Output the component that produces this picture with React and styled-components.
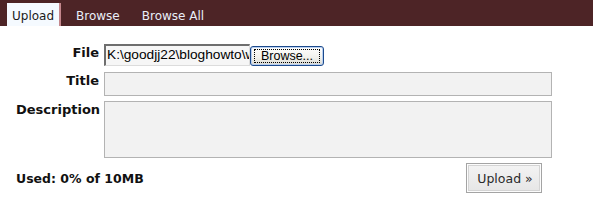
import React from "react";
import styled, { createGlobalStyle } from "styled-components";

const Global = createGlobalStyle`
  html, body { margin: 0; padding: 0; background: #ffffff; }
  body { font-family: "DejaVu Sans", Verdana, sans-serif; }
`;

const Page = styled.div`
  width: 593px;
  height: 214px;
  background: #fff;
`;

const TabBar = styled.div`
  display: flex;
  align-items: flex-end;
  gap: 10px;
  height: 26px;
  padding-left: 7px;
  background: #4d2426;
`;

const Tab = styled.div`
  height: 23px;
  box-sizing: border-box;
  padding: 4px 5px 0 5px;
  font-size: 12px;
  line-height: 18px;
  color: ${(p) => (p.$active ? "#1b1b1b" : "#e9eef8")};
  background: ${(p) => (p.$active ? "#f5faff" : "transparent")};
  border-right: 2px solid ${(p) => (p.$active ? "#c4878c" : "transparent")};
`;

const Form = styled.div`
  display: grid;
  grid-template-columns: 83px 448px;
  column-gap: 5px;
  row-gap: 5px;
  margin: 18px 0 0 16px;
`;

const Label = styled.div`
  font-size: 13px;
  font-weight: bold;
  line-height: 15px;
  padding-top: 1px;
  text-align: right;
  white-space: nowrap;
  color: #111;
`;

const FileRow = styled.div`
  display: flex;
  align-items: center;
  height: 22px;
  margin-bottom: 1px;
`;

const FilePath = styled.div`
  width: 146px;
  height: 22px;
  box-sizing: border-box;
  border-top: 2px solid #6e6e6e;
  border-left: 2px solid #6e6e6e;
  border-right: 1px solid #dcdcdc;
  border-bottom: 1px solid #dcdcdc;
  background: #f6f6f6;
  font-family: "Liberation Sans", Arial, sans-serif;
  font-size: 13.7px;
  line-height: 18px;
  padding-left: 1px;
  white-space: nowrap;
  overflow: hidden;
  color: #000;
`;

const BrowseButton = styled.div`
  width: 74px;
  height: 20px;
  box-sizing: border-box;
  margin-top: 2px;
  border: 1px solid #1c4a8c;
  border-radius: 3px;
  background: linear-gradient(#ffffff, #f1f1ec 60%, #d9d8d0);
  box-shadow: inset 0 0 0 1px #b8cff0;
  display: flex;
  align-items: center;
  justify-content: center;
  font-family: "Liberation Sans", Arial, sans-serif;
  font-size: 12.5px;
  line-height: 14px;
  color: #000;
  position: relative;
  &::after {
    content: "";
    position: absolute;
    top: 2px;
    bottom: 2px;
    left: 3px;
    right: 3px;
    border: 1px dotted #000;
  }
`;

const TextField = styled.div`
  height: ${(p) => p.$h}px;
  box-sizing: border-box;
  border: 1px solid #b3b3b3;
  background: #f2f2f2;
`;

const Footer = styled.div`
  display: flex;
  align-items: center;
  justify-content: space-between;
  width: 526px;
  margin: 5px 0 0 16px;
`;

const Used = styled.div`
  font-size: 12.5px;
  font-weight: bold;
  color: #111;
`;

const UploadButton = styled.div`
  width: 76px;
  height: 30px;
  box-sizing: border-box;
  border: 1px solid #a4a4a4;
  box-shadow: inset 0 0 0 1px #fcfcfc, inset 0 0 0 2px #d4d4d4;
  background: linear-gradient(#f4f4f4, #e6e6e6);
  display: flex;
  align-items: center;
  justify-content: center;
  font-size: 12.5px;
  color: #2a2a2a;
  padding-left: 2px;
`;

export default function App() {
  return (
    <Page>
      <Global />
      <TabBar>
        <Tab $active>Upload</Tab>
        <Tab>Browse</Tab>
        <Tab>Browse All</Tab>
      </TabBar>
      <Form>
        <Label>File</Label>
        <FileRow>
          <FilePath>K:\goodjj22\bloghowto\w</FilePath>
          <BrowseButton>Browse...</BrowseButton>
        </FileRow>
        <Label>Title</Label>
        <TextField $h={24} />
        <Label>Description</Label>
        <TextField $h={57} />
      </Form>
      <Footer>
        <Used>Used: 0% of 10MB</Used>
        <UploadButton>Upload »</UploadButton>
      </Footer>
    </Page>
  );
}
